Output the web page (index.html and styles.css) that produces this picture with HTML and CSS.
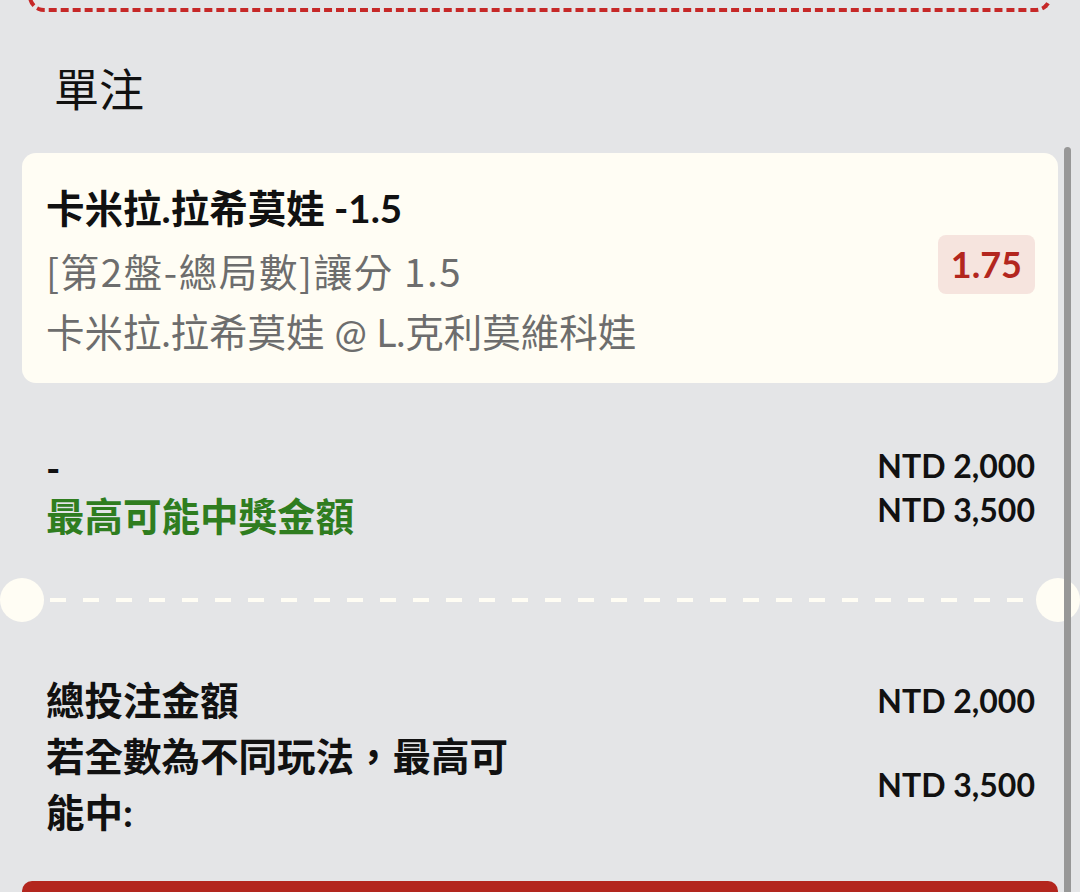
FILE: index.html
```html
<!DOCTYPE html>
<html lang="zh-Hant">
<head>
  <meta charset="UTF-8"/>
  <meta name="viewport" content="width=device-width, initial-scale=1.0"/>
  <title>單注</title>
  <link rel="stylesheet" href="styles.css">
</head>
<body>
  <!-- tail of the previous (selected) slip -->
  <div class="prev-box"></div>

  <h2 class="section-title">單注</h2>

  <!-- Selection card -->
  <div class="bet-card">
    <div class="bet-info">
      <div class="bet-name">卡米拉.拉希莫娃 -1.5</div>
      <div class="bet-market">[第2盤-總局數]讓分 1.5</div>
      <div class="bet-event">卡米拉.拉希莫娃 @ L.克利莫維科娃</div>
    </div>
    <div class="odds">1.75</div>
  </div>

  <!-- Stake / payout -->
  <div class="stake-row">
    <div class="stake-left">
      <div class="stake-input">-</div>
      <div class="payout-label">最高可能中獎金額</div>
    </div>
    <div class="stake-right">
      <div>NTD 2,000</div>
      <div>NTD 3,500</div>
    </div>
  </div>

  <div class="ticket-divider">
    <span class="notch"></span>
    <span class="dash-line"></span>
    <span class="notch"></span>
  </div>

  <!-- Totals -->
  <div class="totals">
    <div class="total-label">總投注金額</div>
    <div class="total-value">NTD 2,000</div>
    <div class="total-label">若全數為不同玩法，最高可能中:</div>
    <div class="total-value">NTD 3,500</div>
  </div>

  <button class="place-btn"></button>

  <div class="scroll-thumb"></div>
</body>
</html>
```

FILE: styles.css
```css
:root {
  --bg: #e4e5e7;
  --paper: #fffdf4;
  --text: #111111;
  --text-muted: #6d6d6d;
  --red: #b3261e;
  --red-soft: #f6e4de;
  --green: #2f7d1f;
}

*, *::before, *::after {
  margin: 0;
  padding: 0;
  box-sizing: border-box;
}

html, body {
  height: 100%;
}

body {
  font-family: 'Lato', 'Noto Sans CJK TC', sans-serif;
  background: var(--bg);
  color: var(--text);
  overflow: hidden;
}

/*—— PREVIOUS SLIP ——*/
.prev-box {
  height: 42px;
  margin: -30px 28px 0;
  border: 4px dashed #c62828;
  border-top: none;
  border-radius: 0 0 16px 16px;
}

/*—— TITLE ——*/
.section-title {
  font-family: 'Noto Sans CJK TC', sans-serif;
  font-size: 45px;
  font-weight: 400;
  line-height: 54px;
  margin: 49px 0 38px 54px;
}

/*—— CARD ——*/
.bet-card {
  display: flex;
  align-items: center;
  justify-content: space-between;
  margin: 0 22px;
  padding: 24px 23px 20px 24px;
  background: var(--paper);
  border-radius: 14px;
}
.bet-info {
  font-size: 38.5px;
  line-height: 62px;
}
.bet-name {
  font-weight: 700;
}
.bet-market {
  font-family: 'Noto Sans CJK TC', sans-serif;
  color: var(--text-muted);
  letter-spacing: 1.6px;
}
.bet-event {
  color: var(--text-muted);
}
.odds {
  background: var(--red-soft);
  color: var(--red);
  font-weight: 700;
  font-size: 36px;
  line-height: 43px;
  padding: 8px 13px;
  margin-bottom: 12px;
  border-radius: 8px;
}

/*—— STAKE ——*/
.stake-row {
  display: flex;
  justify-content: space-between;
  margin: 61px 45px 0 46px;
  font-weight: 700;
}
.stake-left {
  font-size: 38.5px;
  line-height: 48px;
}
.payout-label {
  color: var(--green);
}
.stake-right {
  font-size: 32px;
  line-height: 44px;
  text-align: right;
}

/*—— DIVIDER ——*/
.ticket-divider {
  display: flex;
  align-items: center;
  gap: 6px;
  margin-top: 38px;
}
.notch {
  width: 44px;
  height: 44px;
  border-radius: 50%;
  background: var(--paper);
  flex-shrink: 0;
}
.dash-line {
  flex: 1;
  height: 4px;
  background: repeating-linear-gradient(to right, var(--paper) 0 16px, transparent 16px 33px);
}

/*—— TOTALS ——*/
.totals {
  display: grid;
  grid-template-columns: 475px 1fr;
  align-items: center;
  margin: 50px 45px 0 46px;
  font-weight: 700;
}
.total-label {
  font-size: 38.5px;
  line-height: 56px;
}
.total-value {
  font-size: 32px;
  text-align: right;
}

/*—— BUTTON ——*/
.place-btn {
  display: block;
  width: calc(100% - 44px);
  height: 80px;
  margin: 41px 22px 0;
  border: none;
  border-radius: 10px;
  background: var(--red);
}

/*—— SCROLL INDICATOR ——*/
.scroll-thumb {
  position: fixed;
  top: 147px;
  right: 9px;
  width: 7px;
  height: 800px;
  border-radius: 4px;
  background: #979797;
}
```
